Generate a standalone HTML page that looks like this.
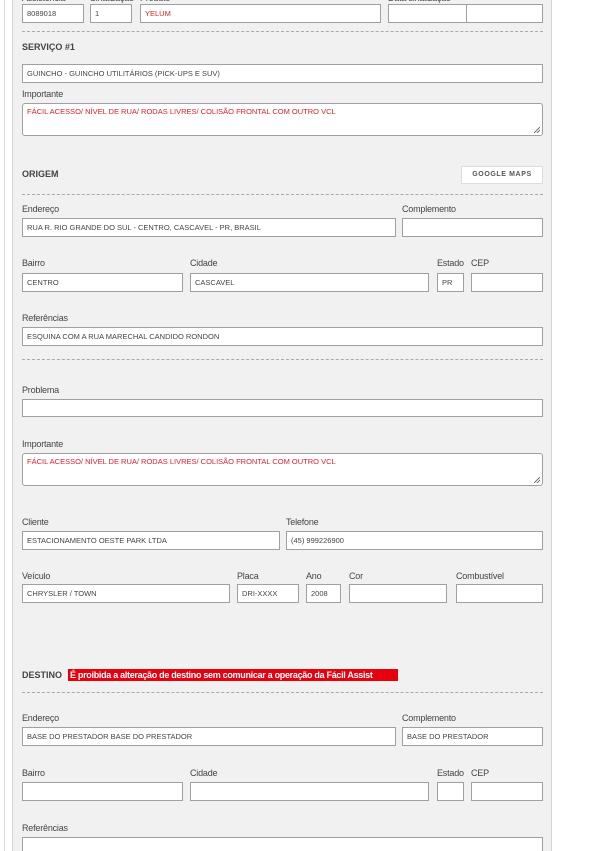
<!DOCTYPE html>
<html style="overflow:hidden;height:851px"><head><meta charset="utf-8"><style>
*{margin:0;padding:0;box-sizing:border-box}
body{width:610px;height:851px;background:#fff;position:relative;overflow:hidden;font-family:"Liberation Sans","DejaVu Sans",sans-serif;color:#333}
.side{position:absolute;left:4px;top:0;width:1px;height:851px;background:#dcdccc}
.panel{position:absolute;left:12px;top:-5px;width:540px;height:860px;background:#f1f1f1;border:1px solid #d6d6d6}
.i{position:absolute;height:19px;background:#fff;border:1px solid #a0a0a0;font-size:7.5px;line-height:17px;padding-left:4px;color:#444;white-space:nowrap;overflow:hidden}
.ta{position:absolute;height:33px;background:#fff;border:1px solid #a0a0a0;border-radius:3px;font-size:7.5px;padding:3px 4px;color:#e0202a}
.ta:after{content:"";position:absolute;right:2px;bottom:2px;width:6px;height:6px;background:linear-gradient(135deg,transparent 45%,#777 45%,#777 55%,transparent 55%,transparent 70%,#777 70%,#777 80%,transparent 80%)}
.l{position:absolute;font-size:9px;color:#444;letter-spacing:-0.2px}
.h{position:absolute;font-size:9px;font-weight:bold;color:#444}
.d{position:absolute;left:22px;width:521px;border-top:1px dashed #aaa;height:0}
.red{color:#e0202a}
.btn{position:absolute;left:461px;top:166px;width:82px;height:18px;background:#fff;border:1px solid #ddd;font-size:7px;font-weight:bold;letter-spacing:.6px;text-align:center;line-height:16px;color:#555}
.warn{position:absolute;left:68px;top:669px;width:330px;height:12px;background:#e8000f;color:#fff;font-size:9px;font-weight:bold;line-height:12px;padding-left:2px;letter-spacing:-0.3px}
</style></head><body>
<div class="side"></div>
<div class="panel"></div>

<div class="l" style="left:22px;top:-7px">Assistência</div>
<div class="l" style="left:90px;top:-7px">Sinalização</div>
<div class="l" style="left:140px;top:-7px">Produto</div>
<div class="l" style="left:388px;top:-7px">Data sinalização</div>
<div class="i" style="left:22px;top:4px;width:62px">8089018</div>
<div class="i" style="left:90px;top:4px;width:42px">1</div>
<div class="i red" style="left:140px;top:4px;width:241px;color:#e0202a">YELUM</div>
<div class="i" style="left:388px;top:4px;width:79px"></div>
<div class="i" style="left:466px;top:4px;width:77px"></div>
<div class="d" style="top:31px"></div>

<div class="h" style="left:22px;top:42px">SERVIÇO #1</div>
<div class="i" style="left:22px;top:64px;width:521px">GUINCHO - GUINCHO UTILITÁRIOS (PICK-UPS E SUV)</div>
<div class="l" style="left:22px;top:89px">Importante</div>
<div class="ta" style="left:22px;top:103px;width:521px">FÁCIL ACESSO/ NÍVEL DE RUA/ RODAS LIVRES/ COLISÃO FRONTAL COM OUTRO VCL</div>

<div class="h" style="left:22px;top:169px">ORIGEM</div>
<div class="btn">GOOGLE MAPS</div>
<div class="d" style="top:194px"></div>
<div class="l" style="left:22px;top:204px">Endereço</div>
<div class="l" style="left:402px;top:204px">Complemento</div>
<div class="i" style="left:22px;top:218px;width:374px">RUA R. RIO GRANDE DO SUL - CENTRO, CASCAVEL - PR, BRASIL</div>
<div class="i" style="left:402px;top:218px;width:141px"></div>
<div class="l" style="left:22px;top:258px">Bairro</div>
<div class="l" style="left:190px;top:258px">Cidade</div>
<div class="l" style="left:437px;top:258px">Estado</div>
<div class="l" style="left:471px;top:258px">CEP</div>
<div class="i" style="left:22px;top:273px;width:161px">CENTRO</div>
<div class="i" style="left:190px;top:273px;width:239px">CASCAVEL</div>
<div class="i" style="left:437px;top:273px;width:27px">PR</div>
<div class="i" style="left:471px;top:273px;width:72px"></div>
<div class="l" style="left:22px;top:313px">Referências</div>
<div class="i" style="left:22px;top:327px;width:521px">ESQUINA COM A RUA MARECHAL CANDIDO RONDON</div>
<div class="d" style="top:359px"></div>

<div class="l" style="left:22px;top:385px">Problema</div>
<div class="i" style="left:22px;top:399px;width:521px;height:18px"></div>
<div class="l" style="left:22px;top:439px">Importante</div>
<div class="ta" style="left:22px;top:453px;width:521px">FÁCIL ACESSO/ NÍVEL DE RUA/ RODAS LIVRES/ COLISÃO FRONTAL COM OUTRO VCL</div>

<div class="l" style="left:22px;top:517px">Cliente</div>
<div class="l" style="left:286px;top:517px">Telefone</div>
<div class="i" style="left:22px;top:531px;width:258px">ESTACIONAMENTO OESTE PARK LTDA</div>
<div class="i" style="left:286px;top:531px;width:257px">(45) 999226900</div>
<div class="l" style="left:22px;top:571px">Veículo</div>
<div class="l" style="left:237px;top:571px">Placa</div>
<div class="l" style="left:306px;top:571px">Ano</div>
<div class="l" style="left:349px;top:571px">Cor</div>
<div class="l" style="left:456px;top:571px">Combustível</div>
<div class="i" style="left:22px;top:584px;width:208px">CHRYSLER / TOWN</div>
<div class="i" style="left:237px;top:584px;width:62px">DRI-XXXX</div>
<div class="i" style="left:306px;top:584px;width:35px">2008</div>
<div class="i" style="left:349px;top:584px;width:98px"></div>
<div class="i" style="left:456px;top:584px;width:87px"></div>

<div class="h" style="left:22px;top:670px">DESTINO</div>
<div class="warn">É proibida a alteração de destino sem comunicar a operação da Fácil Assist</div>
<div class="d" style="top:692px"></div>
<div class="l" style="left:22px;top:713px">Endereço</div>
<div class="l" style="left:402px;top:713px">Complemento</div>
<div class="i" style="left:22px;top:727px;width:374px">BASE DO PRESTADOR BASE DO PRESTADOR</div>
<div class="i" style="left:402px;top:727px;width:141px">BASE DO PRESTADOR</div>
<div class="l" style="left:22px;top:768px">Bairro</div>
<div class="l" style="left:190px;top:768px">Cidade</div>
<div class="l" style="left:437px;top:768px">Estado</div>
<div class="l" style="left:471px;top:768px">CEP</div>
<div class="i" style="left:22px;top:782px;width:161px"></div>
<div class="i" style="left:190px;top:782px;width:239px"></div>
<div class="i" style="left:437px;top:782px;width:27px"></div>
<div class="i" style="left:471px;top:782px;width:72px"></div>
<div class="l" style="left:22px;top:823px">Referências</div>
<div class="i" style="left:22px;top:837px;width:521px;height:25px"></div>
</body></html>
